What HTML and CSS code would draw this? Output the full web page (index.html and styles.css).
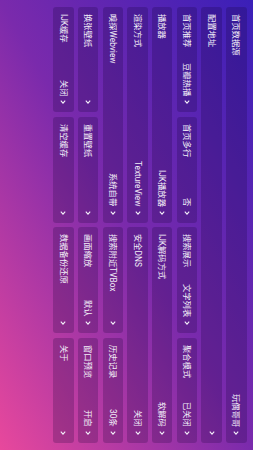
FILE: index.html
```html
<!DOCTYPE html>
<html lang="zh">
<head>
<meta charset="utf-8">
<link rel="stylesheet" href="styles.css">
</head>
<body>
<div class="screen">
  <div class="grid">
    <div class="item s4"><span class="label">首页数据源</span><span class="value">玩偶哥哥</span><svg class="arrow" viewBox="0 0 6 4"><path d="M0.8 0.7 L3 3.2 L5.2 0.7"/></svg></div>
    <div class="item s4"><span class="label">配置地址</span><span class="value"></span><svg class="arrow" viewBox="0 0 6 4"><path d="M0.8 0.7 L3 3.2 L5.2 0.7"/></svg></div>

    <div class="item"><span class="label">首页推荐</span><span class="value">豆瓣热播</span><svg class="arrow" viewBox="0 0 6 4"><path d="M0.8 0.7 L3 3.2 L5.2 0.7"/></svg></div>
    <div class="item"><span class="label">首页多行</span><span class="value">否</span><svg class="arrow" viewBox="0 0 6 4"><path d="M0.8 0.7 L3 3.2 L5.2 0.7"/></svg></div>
    <div class="item"><span class="label">搜索展示</span><span class="value">文字列表</span><svg class="arrow" viewBox="0 0 6 4"><path d="M0.8 0.7 L3 3.2 L5.2 0.7"/></svg></div>
    <div class="item"><span class="label">聚合模式</span><span class="value">已关闭</span><svg class="arrow" viewBox="0 0 6 4"><path d="M0.8 0.7 L3 3.2 L5.2 0.7"/></svg></div>

    <div class="item s2"><span class="label">播放器</span><span class="value">IJK播放器</span><svg class="arrow" viewBox="0 0 6 4"><path d="M0.8 0.7 L3 3.2 L5.2 0.7"/></svg></div>
    <div class="item s2"><span class="label">IJK解码方式</span><span class="value">软解码</span><svg class="arrow" viewBox="0 0 6 4"><path d="M0.8 0.7 L3 3.2 L5.2 0.7"/></svg></div>

    <div class="item s2"><span class="label">渲染方式</span><span class="value">TextureView</span><svg class="arrow" viewBox="0 0 6 4"><path d="M0.8 0.7 L3 3.2 L5.2 0.7"/></svg></div>
    <div class="item s2"><span class="label">安全DNS</span><span class="value">关闭</span><svg class="arrow" viewBox="0 0 6 4"><path d="M0.8 0.7 L3 3.2 L5.2 0.7"/></svg></div>

    <div class="item s2"><span class="label">嗅探Webview</span><span class="value">系统自带</span><svg class="arrow" viewBox="0 0 6 4"><path d="M0.8 0.7 L3 3.2 L5.2 0.7"/></svg></div>
    <div class="item"><span class="label">搜索附近TVBox</span><span class="value"></span><svg class="arrow" viewBox="0 0 6 4"><path d="M0.8 0.7 L3 3.2 L5.2 0.7"/></svg></div>
    <div class="item"><span class="label">历史记录</span><span class="value">30条</span><svg class="arrow" viewBox="0 0 6 4"><path d="M0.8 0.7 L3 3.2 L5.2 0.7"/></svg></div>

    <div class="item"><span class="label">换张壁纸</span><span class="value"></span><svg class="arrow" viewBox="0 0 6 4"><path d="M0.8 0.7 L3 3.2 L5.2 0.7"/></svg></div>
    <div class="item"><span class="label">重置壁纸</span><span class="value"></span><svg class="arrow" viewBox="0 0 6 4"><path d="M0.8 0.7 L3 3.2 L5.2 0.7"/></svg></div>
    <div class="item"><span class="label">画面缩放</span><span class="value">默认</span><svg class="arrow" viewBox="0 0 6 4"><path d="M0.8 0.7 L3 3.2 L5.2 0.7"/></svg></div>
    <div class="item"><span class="label">窗口预览</span><span class="value">开启</span><svg class="arrow" viewBox="0 0 6 4"><path d="M0.8 0.7 L3 3.2 L5.2 0.7"/></svg></div>

    <div class="item"><span class="label">IJK缓存</span><span class="value">关闭</span><svg class="arrow" viewBox="0 0 6 4"><path d="M0.8 0.7 L3 3.2 L5.2 0.7"/></svg></div>
    <div class="item"><span class="label">清空缓存</span><span class="value"></span><svg class="arrow" viewBox="0 0 6 4"><path d="M0.8 0.7 L3 3.2 L5.2 0.7"/></svg></div>
    <div class="item"><span class="label">数据备份还原</span><span class="value"></span><svg class="arrow" viewBox="0 0 6 4"><path d="M0.8 0.7 L3 3.2 L5.2 0.7"/></svg></div>
    <div class="item"><span class="label">关于</span><span class="value"></span><svg class="arrow" viewBox="0 0 6 4"><path d="M0.8 0.7 L3 3.2 L5.2 0.7"/></svg></div>
  </div>
</div>
</body>
</html>
```
FILE: styles.css
```css
html, body {
  margin: 0;
  padding: 0;
  width: 253px;
  height: 450px;
  overflow: hidden;
}

.screen {
  width: 253px;
  height: 450px;
  box-sizing: border-box;
  writing-mode: vertical-rl;
  text-orientation: sideways;
  background: linear-gradient(to bottom left, #3a1fb8 0%, #7a2aac 50%, #e8489c 100%);
  padding-block-start: 6.5px;
  padding-inline: 7px;
  font-family: Roboto, "Noto Sans CJK SC", sans-serif;
  color: #f2eef8;
}

.grid {
  display: grid;
  grid-template-columns: repeat(4, 1fr);
  grid-template-rows: repeat(8, 20.5px);
  column-gap: 4.7px;
  row-gap: 4.2px;
}

.item {
  display: flex;
  align-items: center;
  background: rgba(20, 0, 50, 0.22);
  border-radius: 3px;
  padding-inline-start: 7px;
  padding-inline-end: 8px;
  font-size: 8.3px;
  line-height: 1;
  white-space: nowrap;
  min-inline-size: 0;
}

.s2 { grid-column: span 2; }
.s4 { grid-column: span 4; }

.label {
  flex: 1;
}

.value {
  margin-inline-end: 4px;
}

.arrow {
  width: 6px;
  height: 4px;
  flex: none;
  fill: none;
  stroke: #f2eef8;
  stroke-width: 1.1;
}
```
